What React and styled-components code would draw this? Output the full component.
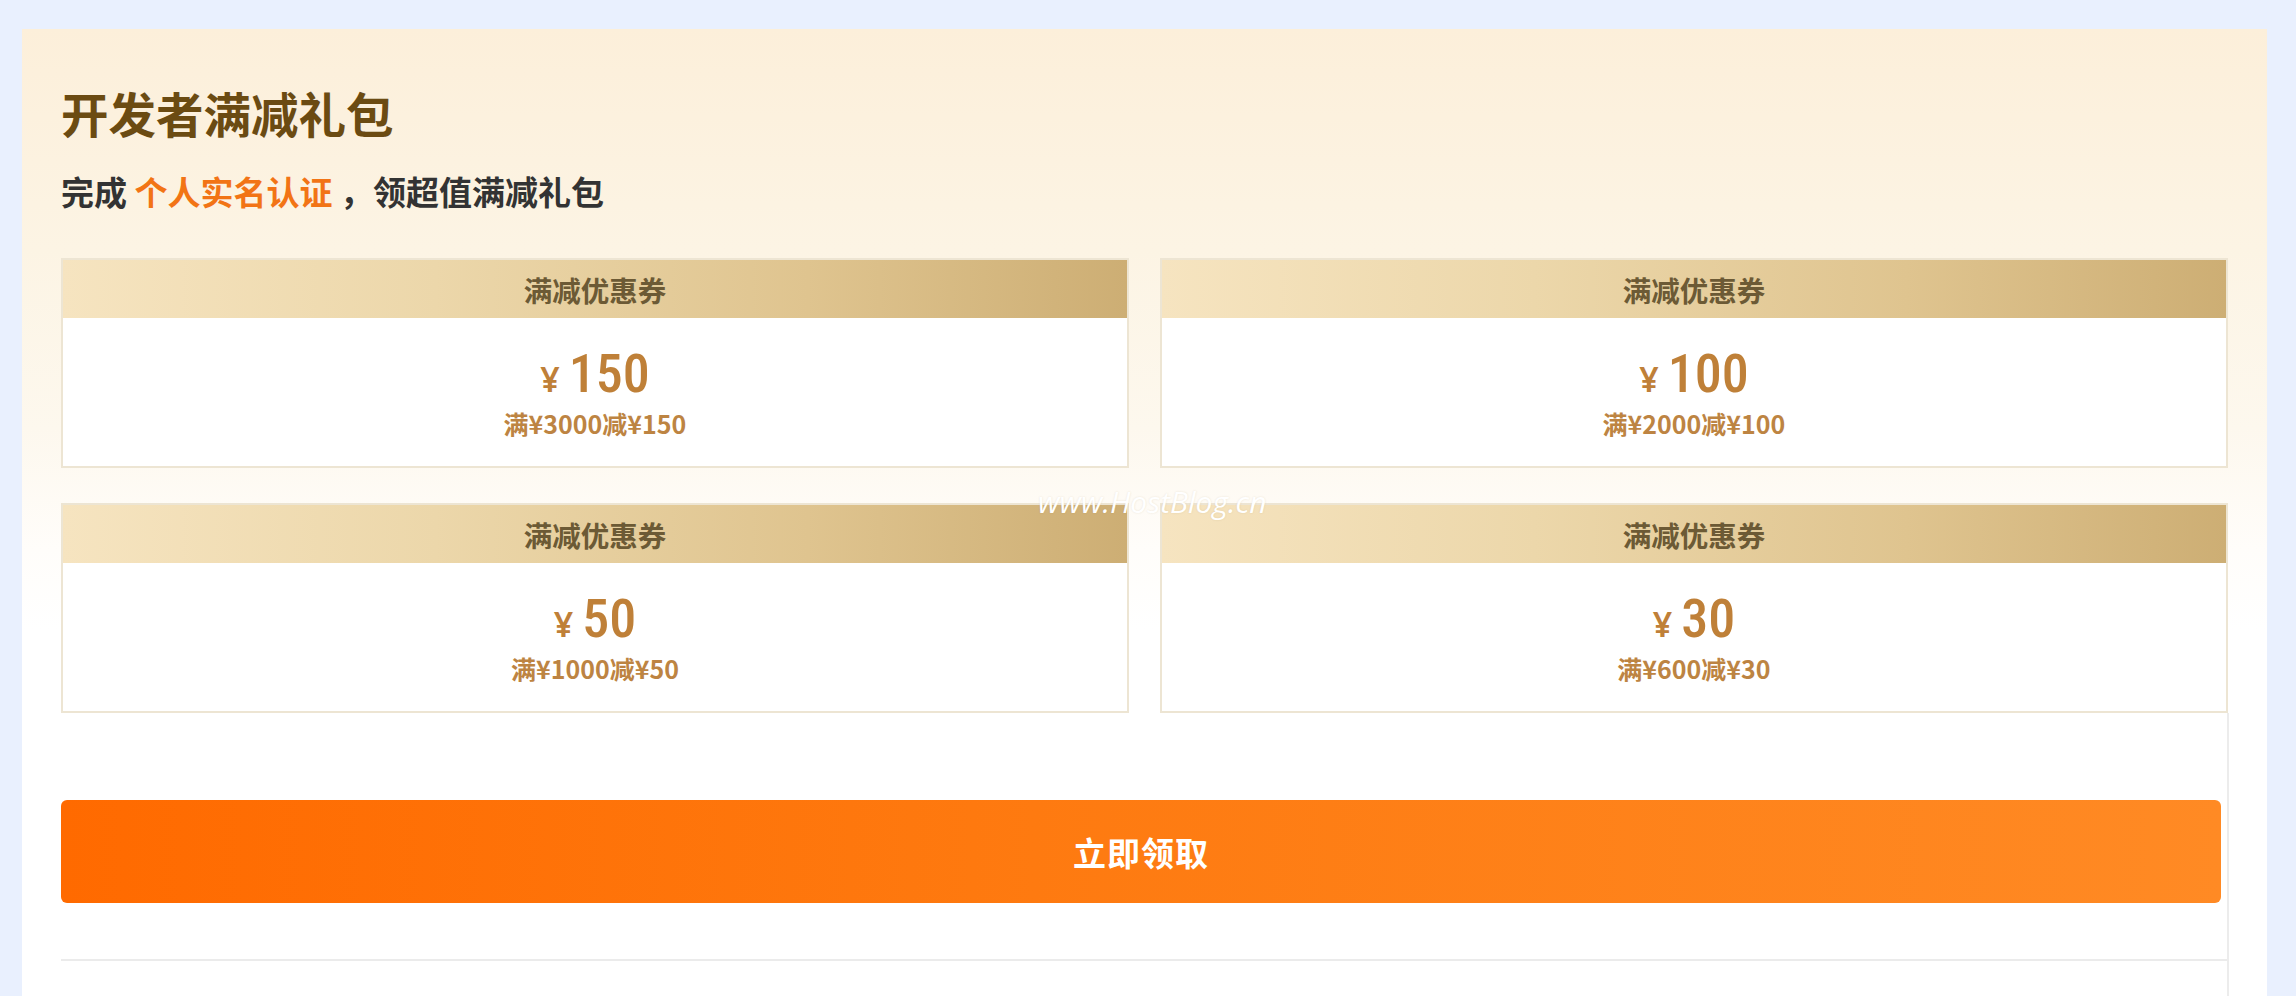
import React from 'react';
import styled, { createGlobalStyle } from 'styled-components';

const GlobalStyle = createGlobalStyle`
  html, body { margin: 0; padding: 0; background: #e9f0fe; }
  body { font-family: "Noto Sans CJK SC", "Noto Sans", sans-serif; }
  * { box-sizing: border-box; }
`;

const Page = styled.div`
  height: 996px;
  overflow: hidden;
  padding: 29px 29px 0 22px;
`;

const Card = styled.section`
  position: relative;
  height: 967px;
  display: flex;
  flex-direction: column;
  padding: 56px 39px 0 39px;
  background: linear-gradient(180deg, #fcefda 0px, #fcf4e4 220px, #fdf8ee 400px, #fffdfa 520px, #ffffff 600px);
`;

const Title = styled.h1`
  margin: 0;
  font-size: 47.5px;
  line-height: 55px;
  font-weight: 700;
  color: #6b4b12;
`;

const Subtitle = styled.p`
  margin: 29px 0 0;
  font-size: 33px;
  line-height: 45px;
  font-weight: 600;
  color: #333333;
  white-space: pre;
`;

const Highlight = styled.span`
  color: #f27415;
`;

const Grid = styled.div`
  margin-top: 44px;
  display: grid;
  grid-template-columns: 1fr 1fr;
  column-gap: 31px;
  row-gap: 35px;
`;

const Coupon = styled.div`
  display: flex;
  flex-direction: column;
  border: 2px solid #ede5d3;
  background: #ffffff;
`;

const CouponHead = styled.div`
  height: 58px;
  display: flex;
  align-items: center;
  justify-content: center;
  background: linear-gradient(90deg, #f6e4c0 0%, #ecd7aa 35%, #dfc48f 70%, #cdae74 100%);
  font-size: 28.5px;
  font-weight: 600;
  color: #6c5a35;
`;

const CouponBody = styled.div`
  height: 148px;
  padding-top: 30px;
  display: flex;
  flex-direction: column;
  align-items: center;
  color: #bf8038;
`;

const Amount = styled.div`
  display: flex;
  align-items: baseline;
  justify-content: center;
  height: 52px;
  line-height: 52px;
`;

const Yen = styled.span`
  font-family: "Noto Sans", "Liberation Sans", sans-serif;
  font-size: 34px;
  font-weight: 600;
  margin-right: 9px;
`;

const Value = styled.span`
  font-family: "Liberation Sans Narrow", "Roboto Condensed", "DejaVu Sans Condensed", "Roboto", sans-serif;
  font-size: 54px;
  font-weight: 500;
`;

const Rule = styled.div`
  margin-top: 9px;
  font-size: 25px;
  line-height: 28px;
  font-weight: 600;
  color: #bd8442;
`;

const Footer = styled.div`
  flex: 1;
  padding-top: 87px;
  border-right: 2px solid #ececec;
  margin-right: -1px;
`;

const ClaimButton = styled.button`
  display: block;
  width: calc(100% - 6px);
  height: 103px;
  border: none;
  border-radius: 6px;
  background: linear-gradient(90deg, #ff6a00 0%, #fe7a10 45%, #ff8a24 100%);
  color: #ffffff;
  font-family: "Noto Sans CJK SC", sans-serif;
  font-size: 33px;
  font-weight: 700;
  letter-spacing: 1px;
  cursor: pointer;
`;

const Divider = styled.hr`
  margin: 56px 0 0;
  height: 2px;
  border: none;
  background: #ebebeb;
`;

const Watermark = styled.div`
  position: absolute;
  left: 1016px;
  top: 455px;
  font-family: "Open Sans", "Liberation Sans", sans-serif;
  font-style: italic;
  font-size: 30px;
  line-height: 36px;
  color: #ffffff;
  text-shadow: 0 0 2px rgba(120, 90, 30, 0.15);
  pointer-events: none;
`;

const coupons = [
  { value: '150', rule: '满¥3000减¥150' },
  { value: '100', rule: '满¥2000减¥100' },
  { value: '50', rule: '满¥1000减¥50' },
  { value: '30', rule: '满¥600减¥30' },
];

export default function App() {
  return (
    <>
      <GlobalStyle />
      <Page>
        <Card>
          <Title>开发者满减礼包</Title>
          <Subtitle>
            完成 <Highlight>个人实名认证</Highlight> ，领超值满减礼包
          </Subtitle>
          <Grid>
            {coupons.map((c) => (
              <Coupon key={c.value}>
                <CouponHead>满减优惠券</CouponHead>
                <CouponBody>
                  <Amount>
                    <Yen>¥</Yen>
                    <Value>{c.value}</Value>
                  </Amount>
                  <Rule>{c.rule}</Rule>
                </CouponBody>
              </Coupon>
            ))}
          </Grid>
          <Footer>
            <ClaimButton>立即领取</ClaimButton>
            <Divider />
          </Footer>
          <Watermark>www.HostBlog.cn</Watermark>
        </Card>
      </Page>
    </>
  );
}
